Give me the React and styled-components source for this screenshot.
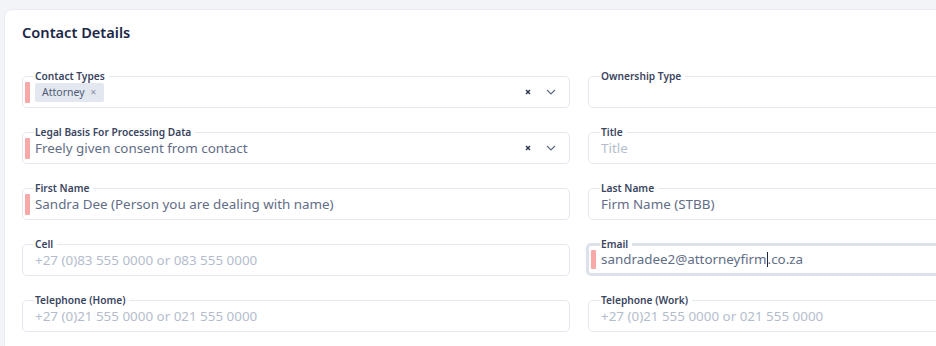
import React from 'react';
import styled, { createGlobalStyle } from 'styled-components';

const GlobalStyle = createGlobalStyle`
  body {
    margin: 0;
    background: #f3f4f8;
    font-family: 'Noto Sans', sans-serif;
    overflow: hidden;
  }
`;

const Page = styled.div`
  padding: 9px 0 0 4px;
`;

const Card = styled.div`
  background: #ffffff;
  border: 1px solid #e8ebf1;
  border-radius: 8px;
  width: 1160px;
  padding: 12px 0 20px 17px;
`;

const Title = styled.h2`
  margin: 0 0 28px;
  font-size: 14.6px;
  font-weight: 600;
  line-height: 20px;
  color: #1b2746;
`;

const Grid = styled.div`
  display: grid;
  grid-template-columns: 548px 548px;
  column-gap: 18px;
  row-gap: 18px;
`;

const Field = styled.fieldset`
  margin: 0;
  min-width: 0;
  height: 38px;
  box-sizing: border-box;
  padding: 0 10px 0 ${(p) => (p.$required ? '2px' : '12px')};
  border: ${(p) => (p.$focused ? '3px solid #dde2ea' : '1px solid #e4e8ef')};
  border-radius: 5px;
  margin-left: ${(p) => (p.$focused ? '-2px' : '0')};
  display: flex;
  align-items: center;
  gap: 5px;
`;

const Label = styled.legend`
  margin-left: ${(p) => (p.$shift ? '9px' : '-1px')};
  padding: 0 4px 0 1px;
  font-size: 10.2px;
  font-weight: 600;
  line-height: 12px;
  color: #3a4560;
`;

const Indicator = styled.span`
  flex: none;
  width: 5px;
  align-self: stretch;
  margin: 0 0 4px;
  background: #f9a8a8;
  border-radius: 1px;
`;

const Value = styled.span`
  flex: 1;
  font-size: 13.4px;
  line-height: 18px;
  color: ${(p) => (p.$placeholder ? '#b4bdcd' : '#626d87')};
  white-space: nowrap;
  margin-top: -5px;
`;

const Caret = styled.span`
  display: inline-block;
  width: 1px;
  height: 15px;
  background: #1b2746;
  vertical-align: -3px;
`;

const Chip = styled.span`
  display: inline-flex;
  align-items: center;
  gap: 5px;
  height: 19px;
  padding: 0 7px;
  background: #e3e8f0;
  border-radius: 2px;
  font-size: 10.5px;
  color: #4f5a74;
`;

const ChipX = styled.span`
  font-size: 8px;
  color: #8a93a8;
`;

const Controls = styled.span`
  display: flex;
  align-items: center;
  gap: 15px;
  margin: -5px 3px 0 0;
  color: #3f4a63;
`;

const ClearIcon = () => (
  <svg width="6" height="6" viewBox="0 0 6 6">
    <path d="M1 1l4 4M5 1L1 5" stroke="#26314d" strokeWidth="1.4" />
  </svg>
);

const Chevron = () => (
  <svg width="10" height="6" viewBox="0 0 10 6" fill="none">
    <path d="M1 1l4 4 4-4" stroke="#5d6882" strokeWidth="1.2" />
  </svg>
);

const TextField = ({ label, value, placeholder, required, focused, children, select }) => (
  <Field $required={required} $focused={focused}>
    <Label $shift={required}>{label}</Label>
    {required && <Indicator />}
    <Value $placeholder={!value && !children}>{children || value || placeholder}</Value>
    {select && (
      <Controls>
        <ClearIcon />
        <Chevron />
      </Controls>
    )}
  </Field>
);

const App = () => {
  return (
    <>
      <GlobalStyle />
      <Page>
        <Card>
          <Title>Contact Details</Title>
          <Grid>
            <TextField label="Contact Types" required select>
              <Chip>
                Attorney <ChipX>✕</ChipX>
              </Chip>
            </TextField>
            <TextField label="Ownership Type" />
            <TextField
              label="Legal Basis For Processing Data"
              value="Freely given consent from contact"
              required
              select
            />
            <TextField label="Title" placeholder="Title" />
            <TextField
              label="First Name"
              value="Sandra Dee (Person you are dealing with name)"
              required
            />
            <TextField label="Last Name" value="Firm Name (STBB)" />
            <TextField label="Cell" placeholder="+27 (0)83 555 0000 or 083 555 0000" />
            <TextField label="Email" required focused>
              sandradee2@attorneyfirm
              <Caret />
              .co.za
            </TextField>
            <TextField label="Telephone (Home)" placeholder="+27 (0)21 555 0000 or 021 555 0000" />
            <TextField label="Telephone (Work)" placeholder="+27 (0)21 555 0000 or 021 555 0000" />
          </Grid>
        </Card>
      </Page>
    </>
  );
};

export default App;
